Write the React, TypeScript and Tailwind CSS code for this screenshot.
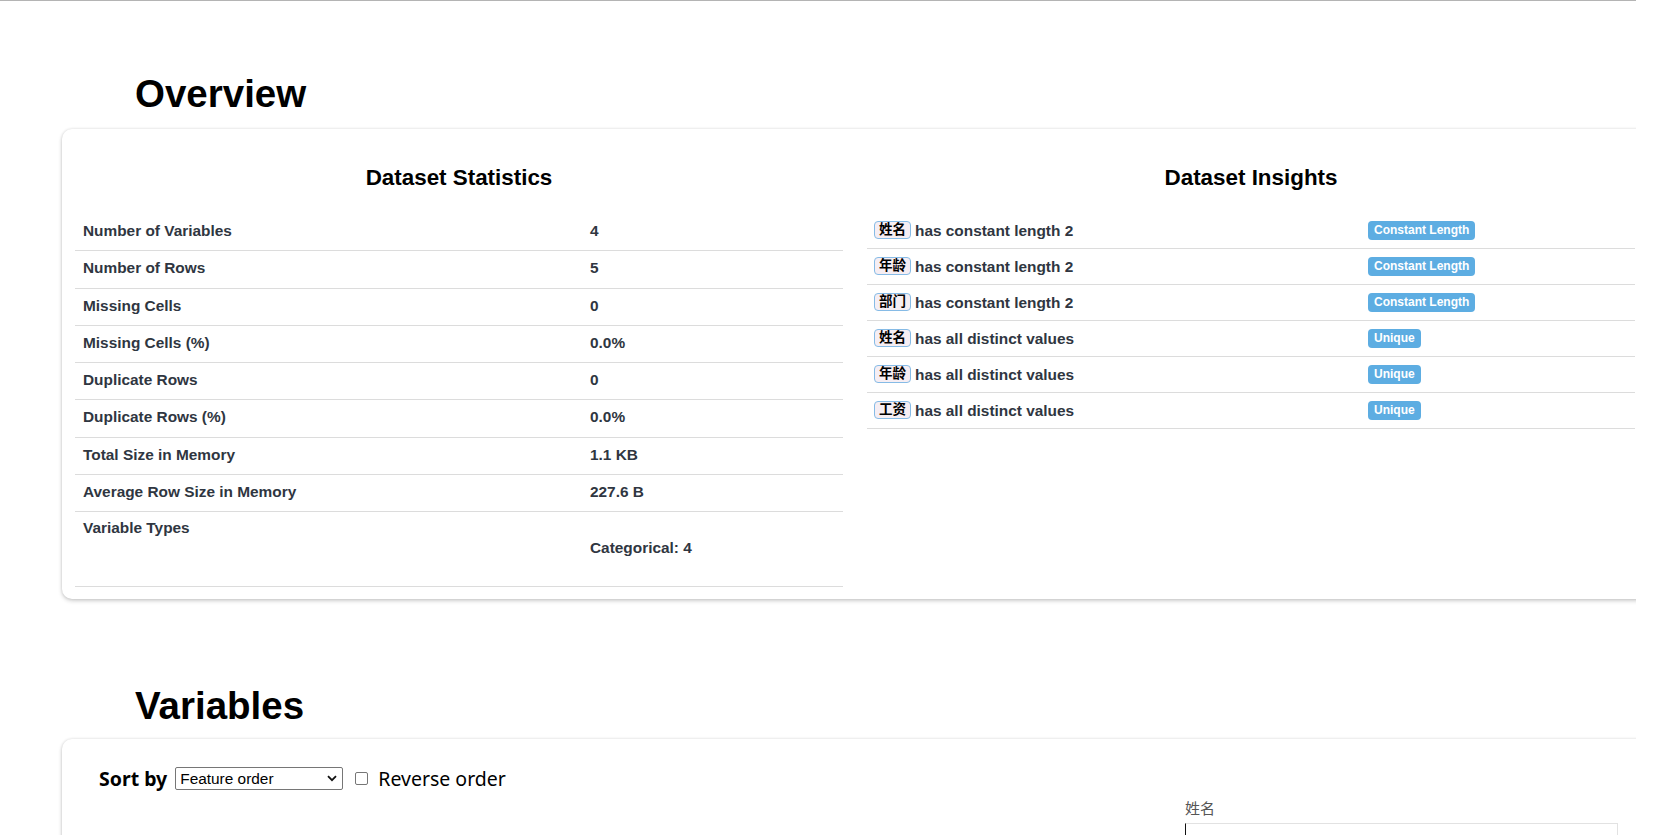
import React from "react";

const stats: [string, string][] = [
  ["Number of Variables", "4"],
  ["Number of Rows", "5"],
  ["Missing Cells", "0"],
  ["Missing Cells (%)", "0.0%"],
  ["Duplicate Rows", "0"],
  ["Duplicate Rows (%)", "0.0%"],
  ["Total Size in Memory", "1.1 KB"],
  ["Average Row Size in Memory", "227.6 B"],
];

const insights: [string, string, string][] = [
  ["姓名", "has constant length 2", "Constant Length"],
  ["年龄", "has constant length 2", "Constant Length"],
  ["部门", "has constant length 2", "Constant Length"],
  ["姓名", "has all distinct values", "Unique"],
  ["年龄", "has all distinct values", "Unique"],
  ["工资", "has all distinct values", "Unique"],
];

const cjk = "font-['Liberation_Sans','Noto_Sans_CJK_SC',sans-serif]";

export default function App() {
  return (
    <div className="w-[1670px] h-[835px] overflow-hidden bg-white flex font-['Liberation_Sans',Arial,sans-serif]">
      <div className="w-[1636px] shrink-0 h-full overflow-hidden border-t border-[#b4b4b4]">
        <h2 className="mt-[74px] ml-[135px] text-[38.5px] leading-none font-bold text-black">Overview</h2>

        <div className="mt-[15px] ml-[62px] w-[1586px] rounded-[10px] bg-white shadow-[0_0_3px_rgba(0,0,0,0.12),0_2px_4px_rgba(0,0,0,0.18)] pt-[38px] pb-[12px] px-[13px] flex gap-[24px]">
          <div className="w-[768px] shrink-0">
            <h3 className="text-center text-[22.4px] leading-none font-bold text-black">Dataset Statistics</h3>
            <div className="mt-[25px] text-[15.4px] font-bold text-[#2f3641]">
              {stats.map(([k, v]) => (
                <div key={k} className="flex items-center h-[37.3px] pb-[3px] border-b border-[#dcdcdc]">
                  <div className="w-[507px] pl-[8px]">{k}</div>
                  <div className="pl-[8px]">{v}</div>
                </div>
              ))}
              <div className="flex h-[75px] border-b border-[#dcdcdc] leading-[20px]">
                <div className="w-[507px] pl-[8px] pt-[6px]">Variable Types</div>
                <div className="pl-[8px] pt-[26px]">Categorical: 4</div>
              </div>
            </div>
          </div>

          <div className="w-[768px] shrink-0">
            <h3 className="text-center text-[22.4px] leading-none font-bold text-black">Dataset Insights</h3>
            <div className="mt-[24px] text-[15.4px] font-bold text-[#2f3641]">
              {insights.map(([name, text, tag], i) => (
                <div key={i} className="flex items-center h-[36px] border-b border-[#dcdcdc]">
                  <div className="w-[501px] pl-[7px] flex items-center">
                    <span className={`${cjk} inline-block h-[18px] leading-[16px] px-[4px] text-[13.5px] font-bold text-black bg-[#f6eef3] border border-[#86bbe6] rounded-[4px]`}>
                      {name}
                    </span>
                    <span className="ml-[4px]">{text}</span>
                  </div>
                  <span className="inline-block h-[19px] leading-[19px] px-[6px] text-[12px] font-bold text-white bg-[#5dade2] rounded-[4px]">
                    {tag}
                  </span>
                </div>
              ))}
            </div>
          </div>
        </div>

        <h2 className="mt-[88px] ml-[135px] text-[38.5px] leading-none font-bold text-black">Variables</h2>

        <div className="mt-[13px] ml-[62px] w-[1586px] h-[200px] rounded-[10px] bg-white shadow-[0_0_3px_rgba(0,0,0,0.12),0_2px_4px_rgba(0,0,0,0.18)] pt-[28px]">
          <div className="flex items-center h-[23px] pl-[37px] font-['Noto_Sans',sans-serif] text-black">
            <span className="text-[19.5px] font-bold leading-none">Sort by</span>
            <div className="ml-[8px] w-[168px] h-[23px] border border-[#767676] rounded-[2px] flex items-center justify-between pl-[4px] pr-[5px] font-['Liberation_Sans',Arial,sans-serif] text-[15.4px] text-black">
              <span className="leading-none">Feature order</span>
              <svg width="10" height="7" viewBox="0 0 10 7" fill="none">
                <path d="M1 1.2 L5 5.2 L9 1.2" stroke="#111" strokeWidth="1.8" />
              </svg>
            </div>
            <span className="ml-[12px] w-[13px] h-[13px] border border-[#767676] rounded-[2px] bg-white" />
            <span className="ml-[10px] text-[19.5px] leading-none">Reverse order</span>
          </div>

          <div className="ml-[1123px] mt-[10px] w-[433px]">
            <div className={`${cjk} text-[15px] leading-[18px] text-[#555]`}>姓名</div>
            <div className="mt-[5px] h-[60px] border border-[#e2e2e2] border-l-[#111]" />
          </div>
        </div>
      </div>
      <div className="flex-1 bg-white" />
    </div>
  );
}
